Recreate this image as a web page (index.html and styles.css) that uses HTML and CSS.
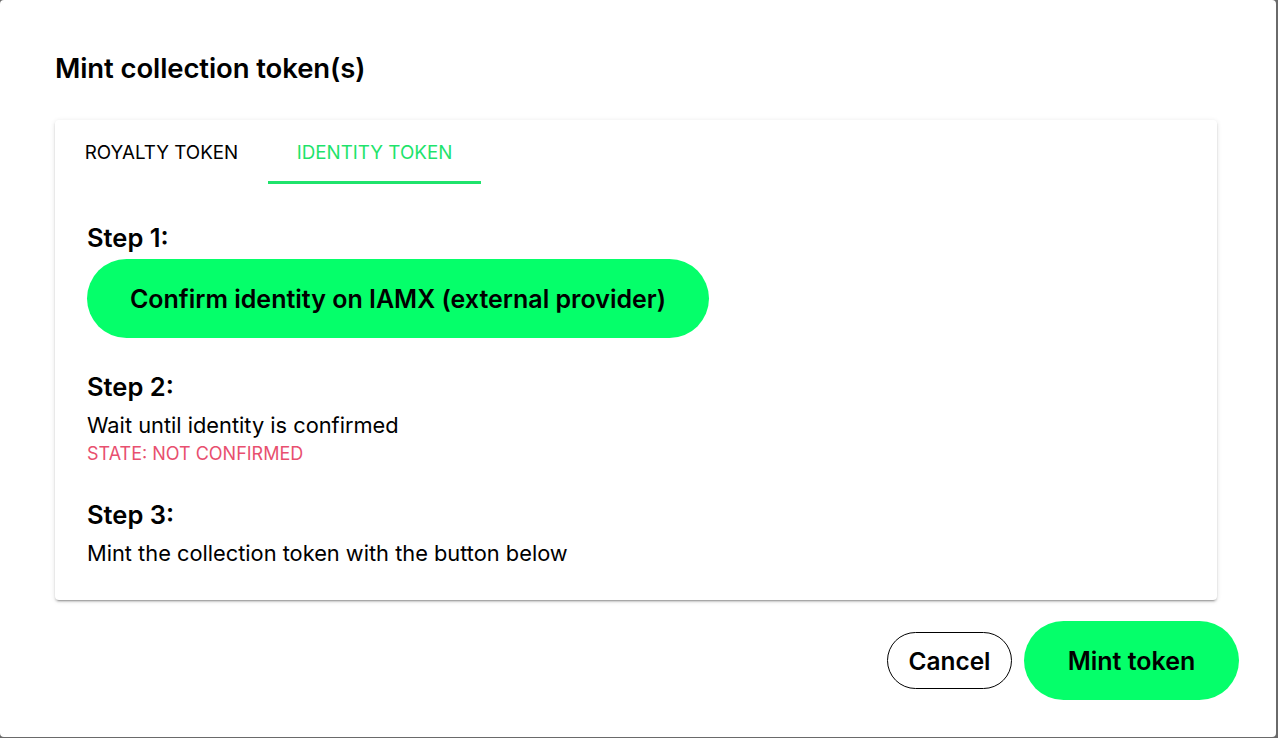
FILE: index.html
```html
<!DOCTYPE html>
<html lang="en">
<head>
    <meta charset="UTF-8">
    <meta name="viewport" content="width=device-width, initial-scale=1.0">
    <title>Mint collection token(s)</title>
    <link rel="stylesheet" href="styles.css">
</head>
<body>
    <div class="dialog">
        <h1 class="dialog-title">Mint collection token(s)</h1>

        <div class="card">
            <!-- Tabs -->
            <div class="tabs">
                <button class="tab">Royalty token</button>
                <button class="tab active">Identity token</button>
            </div>

            <!-- Identity token panel -->
            <div class="panel">
                <h2 class="step-title">Step 1:</h2>
                <button class="btn btn-green btn-confirm">Confirm identity on IAMX (external provider)</button>

                <h2 class="step-title step-gap">Step 2:</h2>
                <p class="step-text">Wait until identity is confirmed</p>
                <p class="state">State: not confirmed</p>

                <h2 class="step-title step-gap">Step 3:</h2>
                <p class="step-text">Mint the collection token with the button below</p>
            </div>
        </div>

        <div class="actions">
            <button class="btn btn-outline">Cancel</button>
            <button class="btn btn-green btn-mint">Mint token</button>
        </div>
    </div>
</body>
</html>
```

FILE: styles.css
```css
html, body {
    margin: 0;
    padding: 0;
    height: 100%;
}
body {
    background-color: #6a6a6a;
    font-family: Inter, "Noto Sans", sans-serif;
    color: #000;
}
.dialog {
    box-sizing: border-box;
    width: 1276px;
    height: 737px;
    background: #fff;
    border-radius: 4px;
    padding: 52px 37px 37px 55px;
    display: flex;
    flex-direction: column;
}
.dialog-title {
    margin: 0;
    font-size: 27.5px;
    line-height: 32px;
    font-weight: 600;
    letter-spacing: -0.1px;
}
.card {
    margin-top: 36px;
    margin-right: 22px;
    border-radius: 4px;
    box-shadow: 0 3px 1px -2px rgba(0,0,0,0.2), 0 2px 2px 0 rgba(0,0,0,0.14), 0 1px 5px 0 rgba(0,0,0,0.12);
}
.tabs {
    display: flex;
}
.tab {
    box-sizing: border-box;
    width: 213px;
    height: 64px;
    padding: 3px 0 0;
    border: none;
    border-bottom: 3px solid transparent;
    background: none;
    font-family: inherit;
    font-size: 18.8px;
    font-weight: 400;
    text-transform: uppercase;
    color: #000;
    cursor: pointer;
}
.tab.active {
    color: #1fe36c;
    border-bottom-color: #1fe36c;
}
.panel {
    padding: 39px 32px 33px;
    display: flex;
    flex-direction: column;
    align-items: flex-start;
}
.step-title {
    margin: 0 0 6px;
    font-size: 25.5px;
    line-height: 30px;
    font-weight: 600;
}
.step-gap {
    margin-top: 34px;
}
.step-text {
    margin: 3px 0 0;
    font-size: 21.8px;
    line-height: 28px;
}
.state {
    margin: 4px 0 0;
    font-size: 18px;
    line-height: 22px;
    text-transform: uppercase;
    color: #e8506f;
}
.state + .step-gap {
    margin-top: 35px;
}
.btn {
    font-family: inherit;
    font-weight: 600;
    font-size: 25px;
    border-radius: 999px;
    cursor: pointer;
    color: #000;
}
.btn-green {
    background-color: #05ff6a;
    border: none;
}
.btn-confirm {
    width: 622px;
    height: 79px;
}
.actions {
    margin-top: 21px;
    display: flex;
    justify-content: flex-end;
    align-items: center;
    gap: 12px;
}
.btn-outline {
    width: 125px;
    height: 57px;
    font-size: 24.4px;
    background: #fff;
    border: 1px solid #000;
}
.btn-mint {
    width: 215px;
    height: 79px;
}
```
